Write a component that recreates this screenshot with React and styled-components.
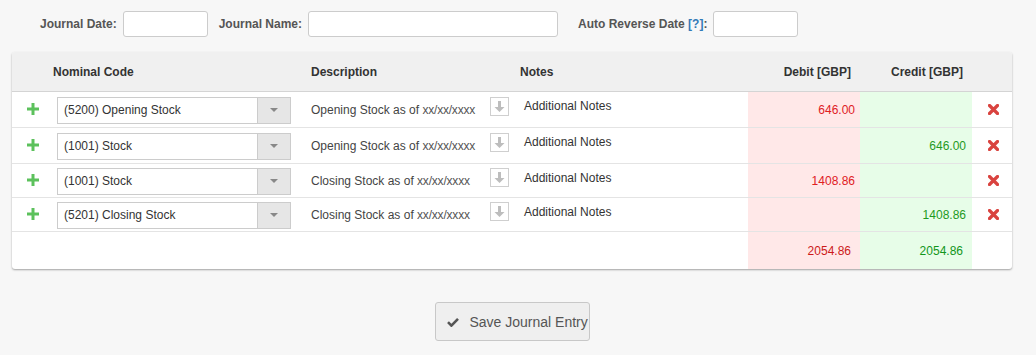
import React from 'react'
import styled, { createGlobalStyle } from 'styled-components'

const GlobalStyle = createGlobalStyle`
  body {
    margin: 0;
    background: #f7f7f7;
    font-family: "Liberation Sans", Arial, sans-serif;
    font-size: 12px;
    color: #333;
  }
`

const COLS = '41px 248px 215px 232px 112px 112px 40px'

const rows = [
  { code: '(5200) Opening Stock', desc: 'Opening Stock as of ', debit: '646.00', credit: '', h: 36 },
  { code: '(1001) Stock', desc: 'Opening Stock as of ', debit: '', credit: '646.00', h: 36 },
  { code: '(1001) Stock', desc: 'Closing Stock as of ', debit: '1408.86', credit: '', h: 34 },
  { code: '(5201) Closing Stock', desc: 'Closing Stock as of ', debit: '', credit: '1408.86', h: 34 },
]

const Page = styled.div`
  width: 1036px;
`

const TopBar = styled.div`
  display: flex;
  align-items: center;
  padding: 11px 0 0 40px;
  height: 26px;
  margin-bottom: 15px;
`

const Label = styled.label`
  font-weight: bold;
  color: #555;
  margin-right: 6px;
  margin-left: ${p => p.gap || 0}px;
  white-space: nowrap;
`

const Help = styled.span`
  color: #337ab7;
`

const TextInput = styled.input`
  box-sizing: border-box;
  width: ${p => p.w}px;
  height: 26px;
  border: 1px solid #ccc;
  border-radius: 3px;
  background: #fff;
  padding: 0 6px;
  font: inherit;
`

const Card = styled.div`
  width: 1000px;
  margin-left: 12px;
  background: #fff;
  border-radius: 3px;
  box-shadow: 0 1px 2px rgba(0, 0, 0, 0.35);
  overflow: hidden;
`

const Row = styled.div`
  display: grid;
  grid-template-columns: ${COLS};
  height: ${p => p.h}px;
  box-sizing: border-box;
  border-bottom: ${p => (p.last ? 'none' : '1px solid #e4e4e4')};
`

const HeadRow = styled(Row)`
  background: #f0f0f0;
  border-bottom: 1px solid #d4d4d4;
  font-weight: bold;
  color: #333;
`

const Cell = styled.div`
  display: flex;
  align-items: ${p => p.top ? 'flex-start' : 'center'};
  justify-content: ${p => p.right ? 'flex-end' : p.center ? 'center' : 'flex-start'};
  padding: ${p => p.pad || '0'};
  background: ${p => p.tone === 'debit' ? '#ffe8e8' : p.tone === 'credit' ? '#e7fde8' : 'transparent'};
  color: ${p => p.tone === 'debit' ? '#e0201f' : p.tone === 'credit' ? '#1f9a1f' : 'inherit'};
  white-space: nowrap;
`

const TotalCell = styled(Cell)`
  color: ${p => p.tone === 'debit' ? '#cc1a1a' : '#12961b'};
`

const SelectWrap = styled.div`
  display: flex;
  height: 27px;
  margin-top: 1px;
`

const SelectText = styled.div`
  box-sizing: border-box;
  width: 200px;
  height: 27px;
  border: 1px solid #ccc;
  border-right: none;
  padding: 0 6px;
  display: flex;
  align-items: center;
  color: #333;
  background: #fff;
`

const SelectButton = styled.div`
  box-sizing: border-box;
  width: 34px;
  height: 27px;
  border: 1px solid #ccc;
  background: #e6e6e6;
  display: flex;
  align-items: center;
  justify-content: center;
`

const Desc = styled.span`
  color: #444;
`

const DescDate = styled.span`
  color: #555;
  letter-spacing: -0.2px;
`

const IconBox = styled.div`
  box-sizing: border-box;
  width: 19px;
  height: 19px;
  border: 1px solid #cfcfcf;
  display: flex;
  align-items: center;
  justify-content: center;
  margin-left: auto;
  margin-right: 7px;
  margin-top: -6px;
`

const Notes = styled.span`
  color: #333;
`

const Footer = styled.div`
  display: flex;
  justify-content: center;
  padding: 33px 0 0 12px;
  width: 1000px;
`

const SaveButton = styled.button`
  display: flex;
  align-items: center;
  gap: 11px;
  height: 39px;
  width: 155px;
  padding: 0 0 0 11px;
  background: #efefef;
  border: 1px solid #c8c8c8;
  border-radius: 3px;
  color: #555;
  font-family: "Liberation Sans", Arial, sans-serif;
  font-size: 14px;
`

const Plus = () => (
  <svg width="12" height="12" viewBox="0 0 12 12">
    <path d="M4.5 0h3v4.5H12v3H7.5V12h-3V7.5H0v-3h4.5z" fill="#5cc15c" />
  </svg>
)

const Cross = () => (
  <svg width="11" height="11" viewBox="0 0 11 11">
    <path d="M1.5 1.5l8 8M9.5 1.5l-8 8" stroke="#d9433f" strokeWidth="3.2" strokeLinecap="round" />
  </svg>
)

const Caret = () => (
  <svg width="8" height="4" viewBox="0 0 8 4">
    <path d="M0 0h8L4 4z" fill="#888" />
  </svg>
)

const DownArrow = () => (
  <svg width="11" height="12" viewBox="0 0 11 12">
    <path d="M4 0h3v6h3.5L5.5 11 0.5 6H4z" fill="#bdbdbd" />
  </svg>
)

const Check = () => (
  <svg width="12" height="10" viewBox="0 0 12 10">
    <path d="M1 5.2l3.4 3.4L11 1.8" fill="none" stroke="#555" strokeWidth="2.6" />
  </svg>
)

export default function App() {
  return (
    <Page>
      <GlobalStyle />
      <TopBar>
        <Label>Journal Date:</Label>
        <TextInput w={85} />
        <Label gap={11}>Journal Name:</Label>
        <TextInput w={250} />
        <Label gap={20}>Auto Reverse Date <Help>[?]</Help>:</Label>
        <TextInput w={85} />
      </TopBar>

      <Card>
        <HeadRow h={40}>
          <Cell />
          <Cell>Nominal Code</Cell>
          <Cell pad="0 0 0 10px">Description</Cell>
          <Cell pad="0 0 0 4px">Notes</Cell>
          <Cell right pad="0 9px 0 0">Debit [GBP]</Cell>
          <Cell right pad="0 9px 0 0">Credit [GBP]</Cell>
          <Cell />
        </HeadRow>

        {rows.map((r, i) => (
          <Row key={i} h={r.h}>
            <Cell center pad="0 0 2px 0"><Plus /></Cell>
            <Cell pad="0 0 0 4px">
              <SelectWrap>
                <SelectText>{r.code}</SelectText>
                <SelectButton><Caret /></SelectButton>
              </SelectWrap>
            </Cell>
            <Cell pad="0 0 0 10px">
              <Desc>{r.desc}<DescDate>xx/xx/xxxx</DescDate></Desc>
              <IconBox><DownArrow /></IconBox>
            </Cell>
            <Cell top pad="7px 0 0 8px"><Notes>Additional Notes</Notes></Cell>
            <Cell right pad="0 5px 0 0" tone="debit">{r.debit}</Cell>
            <Cell right pad="0 6px 0 0" tone="credit">{r.credit}</Cell>
            <Cell center pad="0 0 0 2px"><Cross /></Cell>
          </Row>
        ))}

        <Row h={37} last>
          <Cell />
          <Cell />
          <Cell />
          <Cell />
          <TotalCell right pad="0 9px 0 0" tone="debit" style={{ background: '#ffe8e8' }}>2054.86</TotalCell>
          <TotalCell right pad="0 9px 0 0" tone="credit" style={{ background: '#e7fde8' }}>2054.86</TotalCell>
          <Cell />
        </Row>
      </Card>

      <Footer>
        <SaveButton>
          <Check />
          Save Journal Entry
        </SaveButton>
      </Footer>
    </Page>
  )
}
